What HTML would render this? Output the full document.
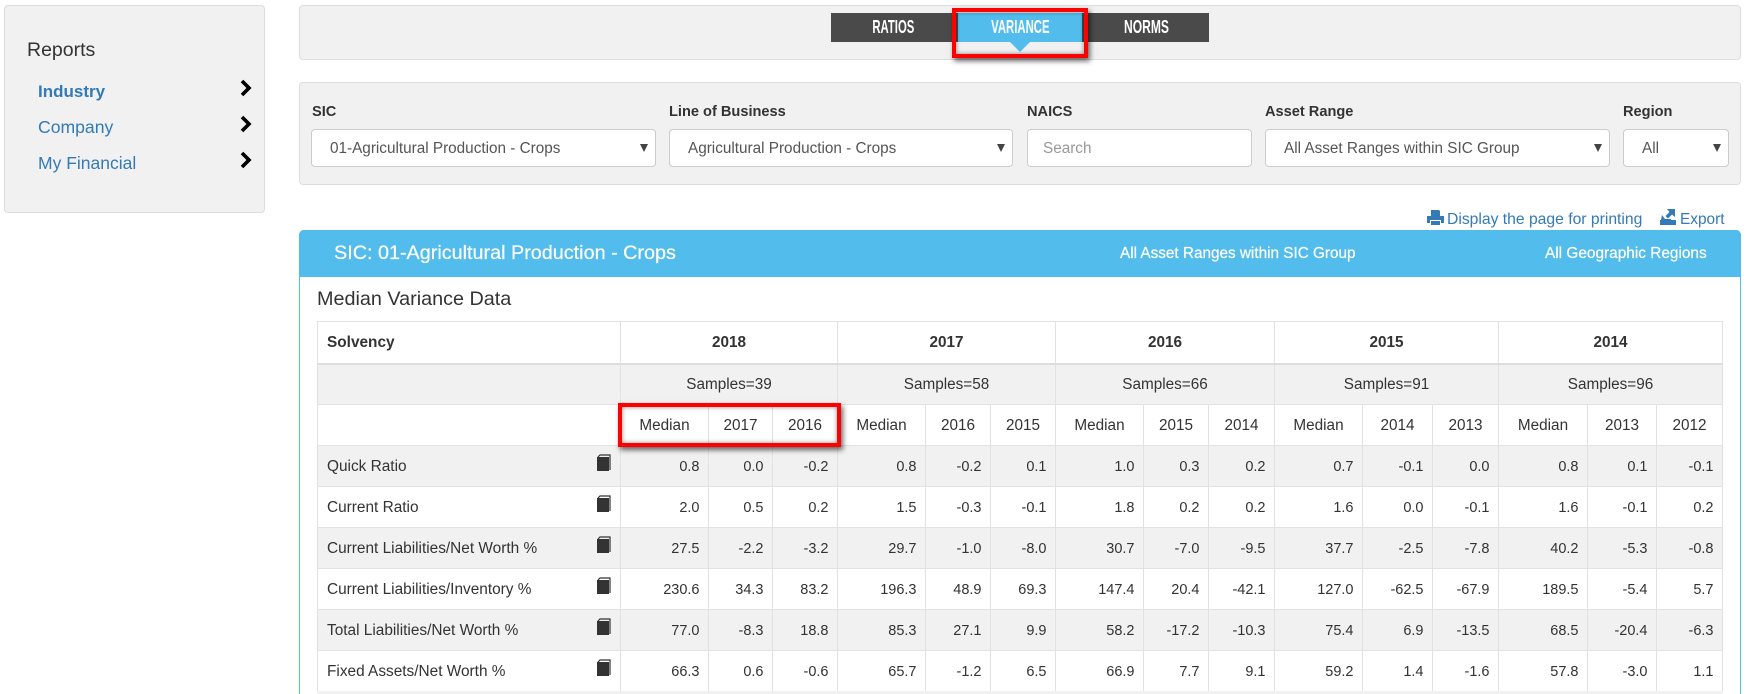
<!DOCTYPE html>
<html><head><meta charset="utf-8">
<style>
*{box-sizing:border-box}
html,body{margin:0;padding:0;background:#fff;font-family:"Liberation Sans",sans-serif;color:#333}
#w{position:relative;width:1746px;height:694px;overflow:hidden;background:#fff}
.a{position:absolute;white-space:nowrap}
.box{position:absolute;background:#f1f1f1;border:1px solid #ddd;border-radius:4px}
.lnk{color:#337ab7}
.lbl{font-weight:bold;font-size:14.6px;top:103px;line-height:18px}
.sel{position:absolute;top:129px;height:38px;background:#fff;border:1px solid #ccc;border-radius:4px;font-size:15.3px;line-height:37px;color:#555;padding-left:18px;white-space:nowrap}
.arr:after{content:"";position:absolute;right:7px;top:14px;border-left:4.500px solid transparent;border-right:4.500px solid transparent;border-top:8px solid #444}
.tab{position:absolute;top:13px;height:29px;line-height:29px;color:#fff;text-align:center;font-size:18px;font-weight:bold}
.tab span{display:inline-block;transform:scaleX(.63)}
table{position:absolute;left:317px;top:321px;border-collapse:collapse;table-layout:fixed;width:1406px;font-size:14.5px}
td{height:41px;border:1px solid #e2e2e2;padding:2px 8.500px 0;text-align:right;white-space:nowrap;overflow:hidden}
td.l{text-align:left;padding-left:9px;position:relative;font-size:15.4px}
td.c{text-align:center;font-size:15.3px}
tr.g td{background:#f1f1f1}
tr.hb td{font-weight:bold;border-bottom:2px solid #ddd;height:42px}
.bk{position:absolute;right:8px;top:8px}
.red{position:absolute;border:4px solid #f00;box-shadow:2px 3px 5px rgba(0,0,0,.6),inset 0 0 5px rgba(0,0,0,.45)}
</style></head><body><div id="w">

<div class="box" style="left:4px;top:5px;width:261px;height:208px"></div>
<div class="a" style="left:27px;top:38px;font-size:19.5px;line-height:24px;color:#333">Reports</div>
<div class="a lnk" style="left:38px;top:81px;font-size:17px;line-height:22px;font-weight:bold">Industry</div>
<div class="a lnk" style="left:38px;top:116px;font-size:17.6px;line-height:22px">Company</div>
<div class="a lnk" style="left:38px;top:152px;font-size:17.5px;line-height:22px">My Financial</div>
<svg class="a" style="left:238px;top:78px" width="16" height="92" viewBox="0 0 16 92" fill="none" stroke="#000" stroke-width="3.600"><path d="M4 3l7 7-7 7M4 39l7 7-7 7M4 75l7 7-7 7"/></svg>

<div class="box" style="left:299px;top:5px;width:1442px;height:55px"></div>
<div class="a" style="left:831px;top:13px;width:378px;height:29px;background:#4a4a4a"></div>
<div class="tab" style="left:830px;width:127px"><span>RATIOS</span></div>
<div class="a" style="left:958px;top:13px;width:124px;height:29px;background:#52bdec"></div>
<div class="tab" style="left:958px;width:124px"><span>VARIANCE</span></div>
<div class="tab" style="left:1083px;width:127px"><span style="transform:scaleX(.67)">NORMS</span></div>
<div class="a" style="left:1010px;top:42px;width:0;height:0;border-left:10px solid transparent;border-right:10px solid transparent;border-top:10px solid #52bdec"></div>
<div class="red" style="left:952px;top:8px;width:136px;height:50px"></div>

<div class="box" style="left:299px;top:82px;width:1442px;height:103px"></div>
<div class="a lbl" style="left:312px">SIC</div>
<div class="a lbl" style="left:669px">Line of Business</div>
<div class="a lbl" style="left:1027px">NAICS</div>
<div class="a lbl" style="left:1265px">Asset Range</div>
<div class="a lbl" style="left:1623px">Region</div>
<div class="sel arr" style="left:311px;width:345px">01-Agricultural Production - Crops</div>
<div class="sel arr" style="left:669px;width:344px">Agricultural Production - Crops</div>
<div class="sel" style="left:1027px;width:225px;padding-left:15px;color:#999">Search</div>
<div class="sel arr" style="left:1265px;width:345px">All Asset Ranges within SIC Group</div>
<div class="sel arr" style="left:1623px;width:106px">All</div>

<svg class="a" style="left:1427px;top:209px" width="17" height="17" viewBox="0 0 17 17" fill="#337ab7"><path d="M4 1h8l1 1v5H4zM0 7h17v7h-3v-3H3v3H0zM4 12h9v4H4z"/></svg>
<div class="a lnk" style="left:1447px;top:211px;font-size:15.700px;line-height:18px">Display the page for printing</div>
<svg class="a" style="left:1660px;top:208px" width="16" height="17" viewBox="0 0 16 17" fill="#337ab7"><path d="M7 1h8v8l-3-2.500-4 4-2.500-2.500 4-4zM2 7l3 4h6v1H1zM0 12h16v5H0z"/></svg>
<div class="a lnk" style="left:1680px;top:211px;font-size:15.400px;line-height:18px">Export</div>

<div class="a" style="left:299px;top:230px;width:1442px;height:464px;border:1px solid #52bdec;border-bottom:0;border-radius:5px 5px 0 0"></div>
<div class="a" style="left:299px;top:230px;width:1442px;height:47px;background:#52bdec;border-radius:5px 5px 0 0"></div>
<div class="a" style="left:334px;top:241px;font-size:19.800px;line-height:24px;color:#fff;-webkit-text-stroke:.2px #fff">SIC: 01-Agricultural Production - Crops</div>
<div class="a" style="left:1120px;top:245px;font-size:15.300px;line-height:18px;color:#fff;-webkit-text-stroke:.2px #fff">All Asset Ranges within SIC Group</div>
<div class="a" style="left:1545px;top:245px;font-size:15.400px;line-height:18px;color:#fff;-webkit-text-stroke:.2px #fff">All Geographic Regions</div>
<div class="a" style="left:317px;top:288px;font-size:19.800px;line-height:22px;color:#333">Median Variance Data</div>

<table>
<colgroup><col style="width:303px"><col style="width:88px"><col style="width:64px"><col style="width:65px"><col style="width:88px"><col style="width:65px"><col style="width:65px"><col style="width:88px"><col style="width:65px"><col style="width:66px"><col style="width:88px"><col style="width:70px"><col style="width:66px"><col style="width:89px"><col style="width:69px"><col style="width:66px"></colgroup>
<tr class="hb"><td class="l">Solvency</td><td class="c" colspan="3">2018</td><td class="c" colspan="3">2017</td><td class="c" colspan="3">2016</td><td class="c" colspan="3">2015</td><td class="c" colspan="3">2014</td></tr>
<tr class="g"><td></td><td class="c" colspan="3">Samples=39</td><td class="c" colspan="3">Samples=58</td><td class="c" colspan="3">Samples=66</td><td class="c" colspan="3">Samples=91</td><td class="c" colspan="3">Samples=96</td></tr>
<tr><td></td><td class="c">Median</td><td class="c">2017</td><td class="c">2016</td><td class="c">Median</td><td class="c">2016</td><td class="c">2015</td><td class="c">Median</td><td class="c">2015</td><td class="c">2014</td><td class="c">Median</td><td class="c">2014</td><td class="c">2013</td><td class="c">Median</td><td class="c">2013</td><td class="c">2012</td></tr>
<tr class="g"><td class="l">Quick Ratio<svg class="bk" width="16" height="18" viewBox="0 0 16 18"><path d="M2 3l2-2h10v15" fill="none" stroke="#333" stroke-width="1.200"/><rect x="1" y="3" width="12" height="14" fill="#333"/></svg></td><td>0.8</td><td>0.0</td><td>-0.2</td><td>0.8</td><td>-0.2</td><td>0.1</td><td>1.0</td><td>0.3</td><td>0.2</td><td>0.7</td><td>-0.1</td><td>0.0</td><td>0.8</td><td>0.1</td><td>-0.1</td></tr>
<tr><td class="l">Current Ratio<svg class="bk" width="16" height="18" viewBox="0 0 16 18"><path d="M2 3l2-2h10v15" fill="none" stroke="#333" stroke-width="1.200"/><rect x="1" y="3" width="12" height="14" fill="#333"/></svg></td><td>2.0</td><td>0.5</td><td>0.2</td><td>1.5</td><td>-0.3</td><td>-0.1</td><td>1.8</td><td>0.2</td><td>0.2</td><td>1.6</td><td>0.0</td><td>-0.1</td><td>1.6</td><td>-0.1</td><td>0.2</td></tr>
<tr class="g"><td class="l">Current Liabilities/Net Worth %<svg class="bk" width="16" height="18" viewBox="0 0 16 18"><path d="M2 3l2-2h10v15" fill="none" stroke="#333" stroke-width="1.200"/><rect x="1" y="3" width="12" height="14" fill="#333"/></svg></td><td>27.5</td><td>-2.2</td><td>-3.2</td><td>29.7</td><td>-1.0</td><td>-8.0</td><td>30.7</td><td>-7.0</td><td>-9.5</td><td>37.7</td><td>-2.5</td><td>-7.8</td><td>40.2</td><td>-5.3</td><td>-0.8</td></tr>
<tr><td class="l">Current Liabilities/Inventory %<svg class="bk" width="16" height="18" viewBox="0 0 16 18"><path d="M2 3l2-2h10v15" fill="none" stroke="#333" stroke-width="1.200"/><rect x="1" y="3" width="12" height="14" fill="#333"/></svg></td><td>230.6</td><td>34.3</td><td>83.2</td><td>196.3</td><td>48.9</td><td>69.3</td><td>147.4</td><td>20.4</td><td>-42.1</td><td>127.0</td><td>-62.5</td><td>-67.9</td><td>189.5</td><td>-5.4</td><td>5.7</td></tr>
<tr class="g"><td class="l">Total Liabilities/Net Worth %<svg class="bk" width="16" height="18" viewBox="0 0 16 18"><path d="M2 3l2-2h10v15" fill="none" stroke="#333" stroke-width="1.200"/><rect x="1" y="3" width="12" height="14" fill="#333"/></svg></td><td>77.0</td><td>-8.3</td><td>18.8</td><td>85.3</td><td>27.1</td><td>9.9</td><td>58.2</td><td>-17.2</td><td>-10.3</td><td>75.4</td><td>6.9</td><td>-13.5</td><td>68.5</td><td>-20.4</td><td>-6.3</td></tr>
<tr><td class="l">Fixed Assets/Net Worth %<svg class="bk" width="16" height="18" viewBox="0 0 16 18"><path d="M2 3l2-2h10v15" fill="none" stroke="#333" stroke-width="1.200"/><rect x="1" y="3" width="12" height="14" fill="#333"/></svg></td><td>66.3</td><td>0.6</td><td>-0.6</td><td>65.7</td><td>-1.2</td><td>6.5</td><td>66.9</td><td>7.7</td><td>9.1</td><td>59.2</td><td>1.4</td><td>-1.6</td><td>57.8</td><td>-3.0</td><td>1.1</td></tr>
</table>
<div class="a" style="left:317px;top:691px;width:1406px;height:3px;background:#f1f1f1"></div>
<div class="red" style="left:618px;top:403px;width:223px;height:44px"></div>
</div></body></html>
